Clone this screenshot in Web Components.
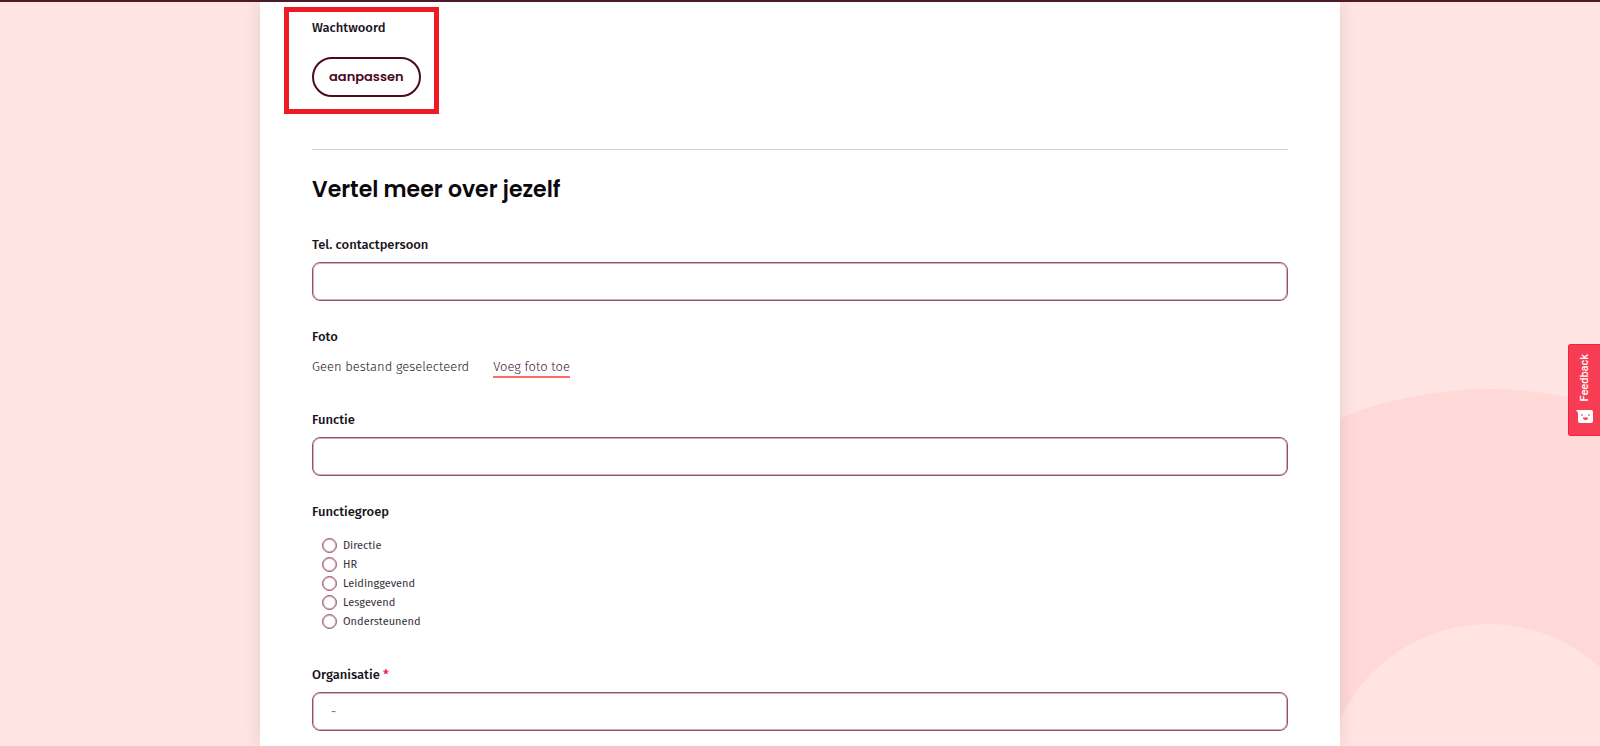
<!DOCTYPE html>
<html lang="nl">
<head>
<meta charset="utf-8">
<meta name="viewport" content="width=device-width, initial-scale=1">
<title>Mijn profiel</title>
<style>
  html, body { margin: 0; }
  body {
    --ink: #171420;
    --wine: #4b0a22;
    --line: #97506f;
    --line-soft: #cfb0c0;
    --coral: #ff6b66;
    --pink: #ffe4e4;
    --display: Poppins, Inter, sans-serif;
    background: var(--pink);
    color: var(--ink);
    font: 13px/20px "Fira Sans", "Noto Sans", sans-serif;
  }
</style>
</head>
<body>
<profile-page>
  <focus-box>
    <form-label>Wachtwoord</form-label>
    <pill-button>aanpassen</pill-button>
  </focus-box>
  <form-section heading="Vertel meer over jezelf">
    <text-field label="Tel. contactpersoon"></text-field>
    <photo-field label="Foto" status="Geen bestand geselecteerd" action="Voeg foto toe"></photo-field>
    <text-field label="Functie"></text-field>
    <radio-group label="Functiegroep" options="Directie,HR,Leidinggevend,Lesgevend,Ondersteunend"></radio-group>
    <text-field label="Organisatie" value="-" required></text-field>
  </form-section>
</profile-page>

<script>
  const define = (name, render) => customElements.define(name, class extends HTMLElement {
    connectedCallback() {
      if (this.shadowRoot) return;
      this.attachShadow({ mode: "open" }).innerHTML = render(this);
    }
  });
  const attr = (el, name) => el.getAttribute(name) || "";

  define("profile-page", () => `
    <style>
      :host { display: block; position: relative; min-height: 100vh; box-sizing: border-box;
              border-top: 2px solid #4a1c2b; overflow: hidden; }
      main { position: relative; box-sizing: border-box; max-width: 1080px; min-height: calc(100vh - 2px);
             margin: 0 auto; padding: 5px 52px 14px; background: #fff;
             box-shadow: 0 0 16px rgba(60, 30, 30, .12); }
    </style>
    <page-backdrop></page-backdrop>
    <main><slot></slot></main>
    <feedback-tab></feedback-tab>`);

  define("page-backdrop", () => `
    <style>
      :host { display: block; position: absolute; right: 0; bottom: 0; width: 508px; height: 357px; }
      svg { display: block; }
    </style>
    <svg width="508" height="357" viewBox="0 0 508 357" aria-hidden="true">
      <circle cx="397" cy="397" r="397" fill="#ffd9d7"/>
      <circle cx="397" cy="399" r="164" fill="#ffe4e2"/>
    </svg>`);

  define("feedback-tab", () => `
    <style>
      :host { display: block; position: absolute; right: 0; top: 342px; }
      button { display: flex; flex-direction: column; align-items: center; justify-content: space-between;
               box-sizing: border-box; width: 32px; height: 92px; padding: 9px 0 11px; border: 1px solid #f5203f;
               border-right: 0; border-radius: 3px 0 0 3px; background: #f73d53; color: #fff;
               font: 500 11px/16px Roboto, sans-serif; cursor: pointer; }
      span { writing-mode: vertical-rl; transform: rotate(180deg); }
      svg { display: block; }
    </style>
    <button type="button">
      <span>Feedback</span>
      <svg width="17" height="14" viewBox="0 0 17 14" aria-hidden="true">
        <path fill="#fff" d="M0 0h15a2 2 0 0 1 2 2v9a2 2 0 0 1-2 2H4a2 2 0 0 1-2-2V3z"/>
        <path fill="#f73d53" d="M5 4.6h2v1H5zM12 4.6h2v1h-2zM7 7.6h5a2.5 2.5 0 0 1-5 0z"/>
      </svg>
    </button>`);

  define("form-label", () => `
    <style>:host { display: block; font-weight: 500; }</style>
    <slot></slot>`);

  define("focus-box", () => `
    <style>
      :host { display: flex; flex-direction: column; gap: 19px; width: fit-content; margin-left: -28px;
              padding: 6px 13px 12px 23px; border: 5px solid #ed1c24; }
    </style>
    <slot></slot>`);

  define("pill-button", () => `
    <style>
      :host { display: block; }
      button { display: block; box-sizing: border-box; height: 40px; padding: 0 15px; border: 2px solid var(--wine);
               border-radius: 20px; background: #fff; color: var(--wine);
               font: 600 13px/20px var(--display); cursor: pointer; }
    </style>
    <button type="button"><slot></slot></button>`);

  define("form-section", el => `
    <style>
      :host { display: flex; flex-direction: column; gap: 26px; margin-top: 35px; padding-top: 25px;
              border-top: 1px solid #dccbd2; }
      h2 { margin: 0 0 4px; font: 600 22px/30px var(--display); color: #0a080c; }
    </style>
    <h2>${attr(el, "heading")}</h2>
    <slot></slot>`);

  define("text-field", el => `
    <style>
      :host { display: flex; flex-direction: column; gap: 7px; }
      label { font-weight: 500; }
      b { color: #ee1c36; font-weight: 500; }
      input { box-sizing: border-box; width: 100%; height: 39px; padding: 0 18px; border: 1px solid var(--line);
              border-radius: 8px; background: #fff; box-shadow: inset 0 0 0 1px var(--line-soft);
              color: #7b7480; font: inherit; }
    </style>
    <label for="box">${attr(el, "label")}${el.hasAttribute("required") ? " <b>*</b>" : ""}</label>
    <input id="box" type="text" value="${attr(el, "value")}">`);

  define("photo-field", el => `
    <style>
      :host { display: flex; flex-direction: column; gap: 10px; margin-bottom: 6px; }
      .name { font-weight: 500; }
      .row { display: flex; align-items: flex-start; gap: 24px; color: #1c1622; font-weight: 300; }
      a { color: #47203a; text-decoration: none; border-bottom: 2px solid var(--coral); line-height: 19px; }
    </style>
    <span class="name">${attr(el, "label")}</span>
    <div class="row"><span>${attr(el, "status")}</span><a href="#foto">${attr(el, "action")}</a></div>`);

  define("radio-group", el => `
    <style>
      :host { display: block; margin-bottom: 8px; }
      fieldset { margin: 0; padding: 0; border: 0; }
      legend { padding: 0; font-weight: 500; }
      .options { display: flex; flex-direction: column; padding: 14px 0 0 10px; }
      label { display: flex; align-items: center; gap: 6px; height: 19px; color: #37313c;
              font-size: 11px; line-height: 19px; }
      input { appearance: none; box-sizing: border-box; width: 15px; height: 15px; margin: 0;
              border: 1px solid var(--line); border-radius: 50%; background: #fff;
              box-shadow: inset 0 0 0 1px var(--line-soft); }
      input:checked { box-shadow: inset 0 0 0 3px #fff; background: var(--line); }
    </style>
    <fieldset>
      <legend>${attr(el, "label")}</legend>
      <div class="options">
        ${attr(el, "options").split(",").map(o => `<label><input type="radio" name="group" value="${o}">${o}</label>`).join("")}
      </div>
    </fieldset>`);
</script>
</body>
</html>
